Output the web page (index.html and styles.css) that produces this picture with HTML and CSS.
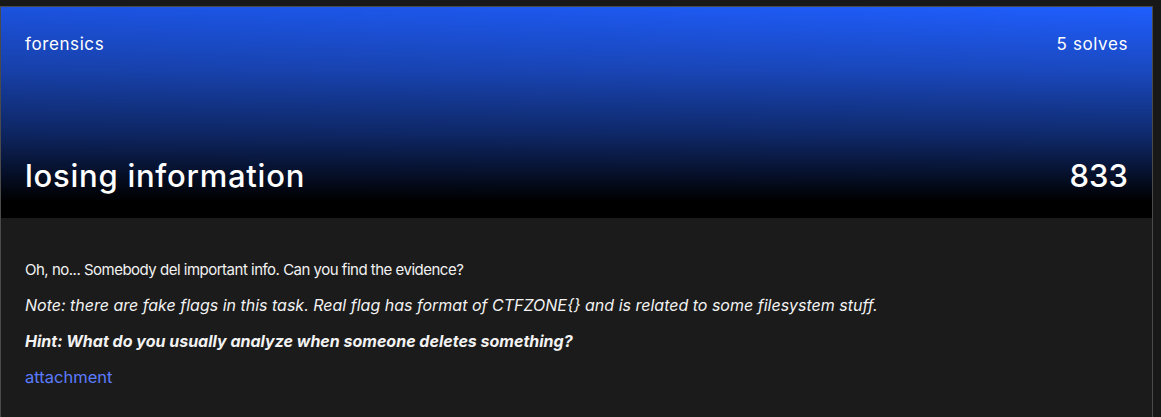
FILE: index.html
```html
<!DOCTYPE html>
<html>
<head>
<meta charset="utf-8">
<link rel="stylesheet" href="styles.css">
</head>
<body>
<div class="page">
  <div class="card">
    <div class="head">
      <div class="row top">
        <span class="cat">forensics</span>
        <span class="solves">5 solves</span>
      </div>
      <div class="row bottom">
        <span class="title">losing information</span>
        <span class="points">833</span>
      </div>
    </div>
    <div class="body">
      <p class="intro">Oh, no... Somebody del important info. Can you find the evidence?</p>
      <p class="note">Note: there are fake flags in this task. Real flag has format of CTFZONE{} and is related to some filesystem stuff.</p>
      <p class="hint">Hint: What do you usually analyze when someone deletes something?</p>
      <p class="att"><a class="link" href="#">attachment</a></p>
    </div>
  </div>
</div>
</body>
</html>
```

FILE: styles.css
```css
html, body {
  margin: 0;
  padding: 0;
  background: #181818;
  height: 100%;
  overflow: hidden;
}
.page {
  padding-top: 6px;
  width: 1153px;
  font-family: Inter, "Noto Sans", sans-serif;
  color: #fff;
}
.card {
  border: 1px solid #4a4a4a;
  border-bottom: none;
  background: #1b1b1b;
  height: 420px;
}
.head {
  height: 211px;
  padding: 0 24px;
  display: flex;
  flex-direction: column;
  justify-content: space-between;
  background:
    linear-gradient(to right, rgba(0,0,0,0.12), rgba(0,0,0,0)),
    linear-gradient(to bottom, #1f5efe 0%, #1a49c0 30%, #0f2a6e 60%, #000 92%);
}
.row {
  display: flex;
  justify-content: space-between;
  align-items: baseline;
}
.top {
  padding-top: 27px;
  font-size: 17px;
  letter-spacing: 0.6px;
}
.bottom {
  padding-bottom: 23px;
  font-size: 31px;
  font-weight: 500;
  line-height: 38px;
}
.title { letter-spacing: 0.75px; }
.body {
  padding: 42px 24px;
  font-size: 15px;
  color: #f2f2f2;
}
.body p {
  margin: 0 0 17px;
  line-height: 19px;
}
.intro { letter-spacing: -0.5px; }
.note { font-style: italic; font-size: 16px; }
.hint { font-style: italic; font-weight: 700; font-size: 16px; }
.att { font-size: 16.5px; }
.link { color: #5b7bff; text-decoration: none; }
```
